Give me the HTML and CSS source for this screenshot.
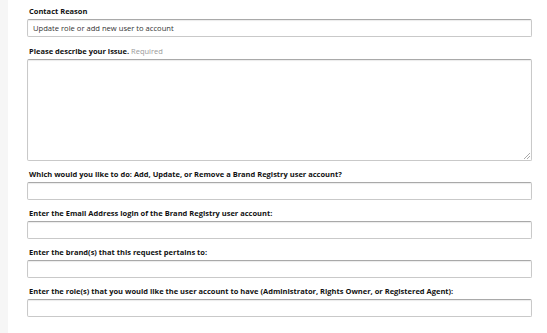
FILE: index.html
```html
<!DOCTYPE html>
<html>
<head>
<meta charset="utf-8">
<link rel="stylesheet" href="styles.css">
</head>
<body>
<div class="page">
  <form class="form">
    <div class="field">
      <label class="label">Contact Reason</label>
      <div class="input filled">Update role or add new user to account</div>
    </div>
    <div class="field tall">
      <label class="label">Please describe your issue. <span class="req">Required</span></label>
      <div class="textarea"><span class="grip"></span></div>
    </div>
    <div class="field gap">
      <label class="label">Which would you like to do: Add, Update, or Remove a Brand Registry user account?</label>
      <div class="input"></div>
    </div>
    <div class="field gap">
      <label class="label">Enter the Email Address login of the Brand Registry user account:</label>
      <div class="input"></div>
    </div>
    <div class="field gap">
      <label class="label">Enter the brand(s) that this request pertains to:</label>
      <div class="input"></div>
    </div>
    <div class="field gap">
      <label class="label">Enter the role(s) that you would like the user account to have (Administrator, Rights Owner, or Registered Agent):</label>
      <div class="input"></div>
    </div>
  </form>
</div>
</body>
</html>
```
FILE: styles.css
```css
html, body {
  margin: 0;
  padding: 0;
  background: #fff;
}
.page {
  width: 547px;
  height: 333px;
  overflow: hidden;
  background: linear-gradient(to right, #f6f6f6 0, #f6f6f6 8px, #fff 8px);
  font-family: "Open Sans", "Liberation Sans", sans-serif;
  color: #111;
}
.form {
  margin-left: 27px;
  width: 505px;
  padding-top: 6px;
  display: flex;
  flex-direction: column;
}
.field {
  display: flex;
  flex-direction: column;
  margin-bottom: 9px;
}
.field.tall {
  margin-bottom: 8px;
}
.field.gap {
  margin-bottom: 8px;
}
.label {
  font-size: 7.5px;
  font-weight: 700;
  line-height: 10px;
  padding-left: 2px;
  margin-bottom: 3px;
}
.req {
  color: #999;
  font-weight: 400;
}
.input {
  height: 18px;
  box-sizing: border-box;
  border: 1px solid #c9c9c9;
  border-top-color: #a9a9a9;
  border-radius: 2px;
  box-shadow: inset 0 1px 1px rgba(0,0,0,0.08);
  background: #fff;
  font-size: 7.6px;
  line-height: 16px;
  padding-left: 5px;
  color: #333;
}
.textarea {
  position: relative;
  height: 102px;
  box-sizing: border-box;
  border: 1px solid #c9c9c9;
  border-top-color: #a9a9a9;
  border-radius: 2px;
  box-shadow: inset 0 1px 1px rgba(0,0,0,0.08);
  background: #fff;
}
.grip {
  position: absolute;
  right: 1px;
  bottom: 1px;
  width: 6px;
  height: 6px;
  background: linear-gradient(135deg, transparent 0 45%, #aaa 45% 55%, transparent 55% 70%, #aaa 70% 80%, transparent 80%);
}
```
